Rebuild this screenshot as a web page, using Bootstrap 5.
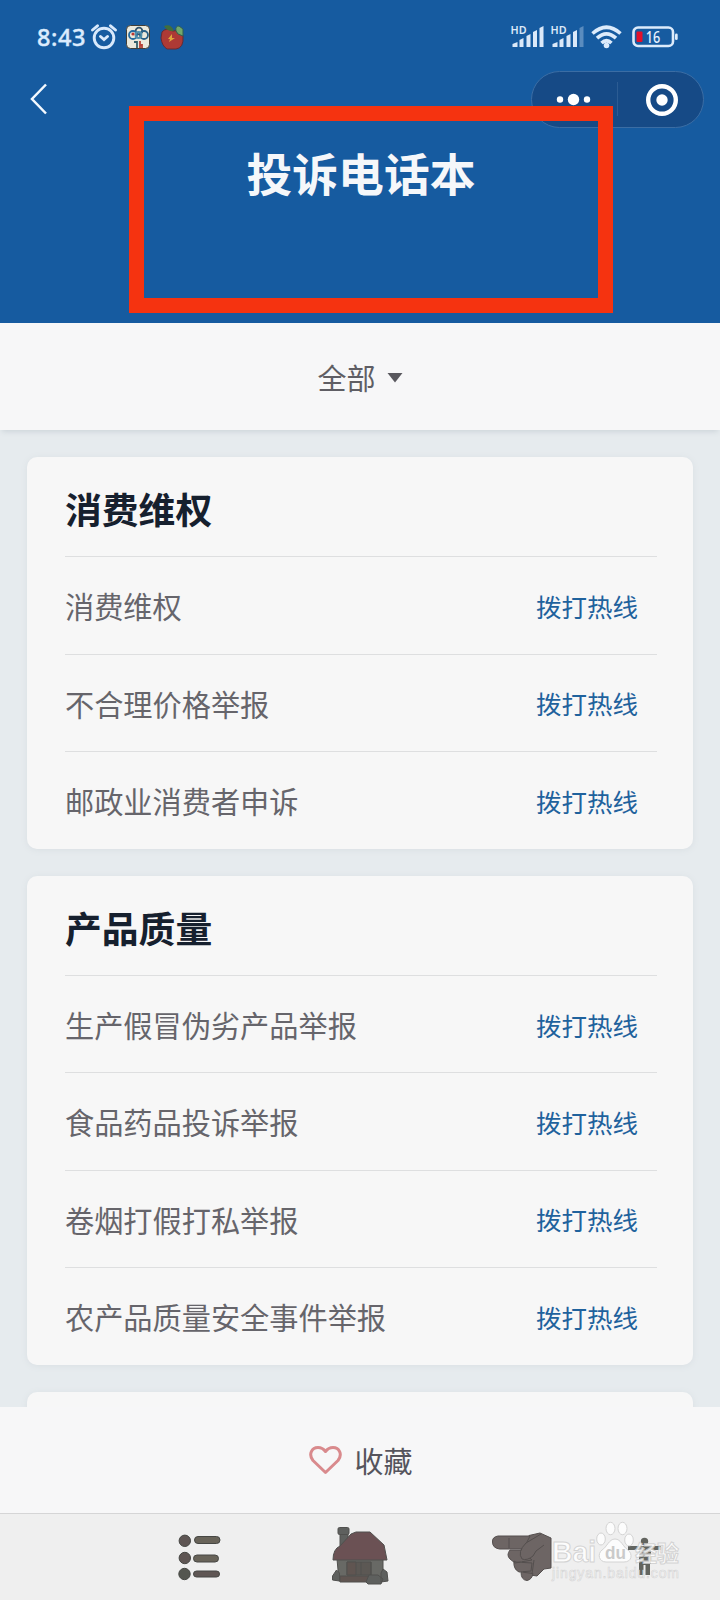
<!DOCTYPE html>
<html lang="zh-CN">
<head>
<meta charset="utf-8">
<meta name="viewport" content="width=device-width, initial-scale=1">
<title>投诉电话本</title>
<link href="https://cdn.jsdelivr.net/npm/bootstrap@5.3.0/dist/css/bootstrap.min.css" rel="stylesheet">
<style>
  body { font-family: "Noto Sans CJK SC", sans-serif; background: #e6ebee; color: #66656b; }
  .screen { width: 720px; height: 1600px; }
  svg { display: block; flex: none; }
  .hero { height: 323px; background: #165ba0; color: #f5f7fa; }
  .status { height: 71px; padding: 3px 42px 0 37px; }
  .clock { font: 500 23.500px/24px "Noto Sans", sans-serif; width: 54px; color: #dcebfd; letter-spacing: .6px; -webkit-text-stroke: .4px #dcebfd; }
  .app-a { margin: 0 9px 0 8px; }
  .signal-a { margin-right: 4px; }
  .wifi { margin: 0 10px 0 6px; }
  .navrow { height: 56px; padding: 0 16px 0 29px; }
  .capsule { width: 173px; height: 57px; background: #164a86; border: 1px solid #3b6da4; }
  .split { width: 1px; height: 34px; background: #2c5c93; }
  .hero h1 { font-size: 45.8px; line-height: 60px; margin: 15px 0 0 2px; }
  .marker { left: 129px; top: 106px; width: 484px; height: 207px; border: 15px solid #f53310; }
  .filter { height: 107px; background: #f7f7f8; font-size: 29px; gap: 11px; padding-top: 3px; box-shadow: 0 4px 5px -2px #cfd6db; color: #5f5e64; }
  .list-area { min-height: 0; padding: 27px 27px 0; gap: 27px; }
  .book { background: #f7f7f7; border-radius: 10px; padding: 0 36px 0 38px; box-shadow: 0 1px 6px #d9dfe3; }
  .book h2 { height: 99.4px; margin: 0; padding-top: 3px; font-size: 36.8px; font-weight: 700; color: #16202e; }
  .entry { height: 97.4px; border-top: 1px solid #dedfe0; font-size: 29.2px; padding: 1px 19px 0 0; }
  .entry a { font-size: 25.5px; color: #1f629d; }
  .next-book { height: 60px; }
  .fav { height: 106px; background: #f7f7f8; font-size: 29px; gap: 12px; color: #55545d; padding: 2px 0 0 2px; }
  .tabs { height: 87px; background: #efefef; border-top: 1px solid #d5d5d6; }
  .mark-logo { left: 545px; top: 1515px; }
</style>
</head>
<body>
<div class="screen position-relative overflow-hidden d-flex flex-column">
  <header class="hero flex-shrink-0">
    <div class="status d-flex align-items-center">
      <span class="clock">8:43</span>
      <svg width="26" height="26" viewBox="0 0 26 26" fill="none" stroke="#d9e9fb" stroke-width="2.9" stroke-linecap="round"><circle cx="13" cy="14" r="9.8"/><path d="M1.500 6 6.500 1.800M24.500 6 19.500 1.800M9.500 12.500l3.500 3 3.500-3"/></svg>
      <svg class="app-a" width="26" height="24" viewBox="0 0 26 24"><rect x="1.500" y=".5" width="23" height="23" rx="4" fill="#ebe9dc" stroke="#433f37"/><g fill="none" stroke-width="1.800"><circle cx="14" cy="6" r="3.300" stroke="#34546c"/><circle cx="8" cy="10" r="4" stroke="#246ba0"/><circle cx="19" cy="10" r="4" stroke="#286087"/><circle cx="13.500" cy="10" r="3" stroke="#5290ac"/><path d="M9 17h3v6" stroke="#35626d"/><path d="M15 16v7m0-3h2v3" stroke="#b64237"/></g><circle cx="8" cy="9" r="1.600" fill="#b93732"/></svg>
      <svg width="26" height="26" viewBox="0 0 26 26"><path d="M2 8Q6 3 13 7q8-2 10 5 1 12-7 13H7Q2 22 1 14z" fill="#ad3a35" stroke="#682a32"/><path d="M4 2q7-3 10 5Q7 8 4 2z" fill="#416e3d"/><path d="M16 7q-1-5 3-5l4 3v7l-5-2z" fill="#72a86c" stroke="#315f50"/><path d="M12 10v4h3l-6 4 1-3H8z" fill="#e0a63c"/></svg>
      <svg class="signal-a ms-auto" width="36" height="40" viewBox="-2 -8 36 40" fill="#dbe9f9"><text x="-.5" y="8.500" font-family="Noto Sans" font-size="11" font-weight="600" textLength="16" lengthAdjust="spacingAndGlyphs">HD</text><path d="M1.500 22v-3l5-2v5zM8.500 22v-7l4-2v9zM15.500 22V11l4-2v13zM22 22V7l4-2v17zM28.500 22V3l4-2v21z"/></svg>
      <svg width="36" height="40" viewBox="-2 -8 36 40" fill="#dbe9f9"><text x="-.5" y="8.500" font-family="Noto Sans" font-size="11" font-weight="600" textLength="16" lengthAdjust="spacingAndGlyphs">HD</text><path d="M1.500 22v-3l5-2v5zM8.500 22v-7l4-2v9zM15.500 22V11l4-2v13zM22 22V7l4-2v17z"/><path opacity=".35" d="M28.500 22V3l4-2v21z"/></svg>
      <svg class="wifi" width="31" height="24" viewBox="0 0 31 24" fill="none" stroke="#dcebfb" stroke-width="3.600"><path d="M1.500 8.500Q15.500-4 29.500 8.500M6 13.200Q15.500 4.500 25 13.200M10.500 18q5-4.500 10 0"/><circle cx="15.500" cy="20.500" r="2.800" fill="#dcebfb" stroke="none"/></svg>
      <svg width="46" height="22" viewBox="0 0 46 22"><rect x="1.500" y="1.500" width="39.500" height="18.500" rx="4.500" fill="none" stroke="#dcebfb" stroke-width="2.600"/><rect x="4.500" y="5.500" width="6" height="10.500" rx="1" fill="#e2102b"/><rect x="43" y="7.500" width="2.700" height="6.500" rx="1.300" fill="#dcebfb"/><text x="13.800" y="16.500" font-family="Noto Sans" font-size="15.500" font-weight="500" fill="#e6f1ff" textLength="14.500" lengthAdjust="spacingAndGlyphs">16</text></svg>
    </div>
    <div class="navrow d-flex align-items-center justify-content-between">
      <svg width="20" height="32" viewBox="0 0 20 32" fill="none" stroke="#f3f9ff" stroke-width="2.500"><path d="M17 1.500 3 16l14 14.500"/></svg>
      <div class="capsule rounded-pill d-flex align-items-center">
        <svg width="85" height="54" viewBox="0 0 85 54" fill="#fff"><circle cx="28" cy="27.500" r="3.200"/><circle cx="41.500" cy="27.500" r="5.700"/><circle cx="55" cy="27.500" r="3.200"/></svg>
        <span class="split"></span>
        <svg width="84" height="54" viewBox="0 0 84 54"><circle cx="44" cy="28" r="13.800" fill="none" stroke="#fff" stroke-width="4.400"/><circle cx="44" cy="28" r="5.700" fill="#fff"/></svg>
      </div>
    </div>
    <h1 class="text-center fw-bold">投诉电话本</h1>
  </header>
  <div class="marker position-absolute"></div>

  <div class="filter flex-shrink-0 d-flex align-items-center justify-content-center">
    <span>全部</span>
    <svg width="16" height="10" viewBox="0 0 16 10"><path d="M.5 0h15L8 9.500z" fill="#59585e"/></svg>
  </div>

  <main class="list-area d-flex flex-column flex-grow-1 overflow-hidden">
    <section class="book flex-shrink-0">
      <h2 class="d-flex align-items-center">消费维权</h2>
      <div class="entry d-flex align-items-center justify-content-between"><span>消费维权</span><a class="text-decoration-none" href="#">拨打热线</a></div>
      <div class="entry d-flex align-items-center justify-content-between"><span>不合理价格举报</span><a class="text-decoration-none" href="#">拨打热线</a></div>
      <div class="entry d-flex align-items-center justify-content-between"><span>邮政业消费者申诉</span><a class="text-decoration-none" href="#">拨打热线</a></div>
    </section>
    <section class="book flex-shrink-0">
      <h2 class="d-flex align-items-center">产品质量</h2>
      <div class="entry d-flex align-items-center justify-content-between"><span>生产假冒伪劣产品举报</span><a class="text-decoration-none" href="#">拨打热线</a></div>
      <div class="entry d-flex align-items-center justify-content-between"><span>食品药品投诉举报</span><a class="text-decoration-none" href="#">拨打热线</a></div>
      <div class="entry d-flex align-items-center justify-content-between"><span>卷烟打假打私举报</span><a class="text-decoration-none" href="#">拨打热线</a></div>
      <div class="entry d-flex align-items-center justify-content-between"><span>农产品质量安全事件举报</span><a class="text-decoration-none" href="#">拨打热线</a></div>
    </section>
    <section class="book next-book flex-shrink-0"></section>
  </main>

  <div class="fav flex-shrink-0 d-flex align-items-center justify-content-center">
    <svg width="33" height="30" viewBox="0 0 33 30" fill="none" stroke="#d98a8d" stroke-width="3" stroke-linejoin="round"><path d="M16.500 26.500 4 14.500C-1 8 3 1.500 9 1.500c3.500 0 6 2 7.500 4 1.500-2 4-4 7.500-4 6 0 10 6.500 5 13z"/></svg>
    <span>收藏</span>
  </div>
  <nav class="tabs flex-shrink-0">
    <svg width="720" height="86" viewBox="0 1514 720 86" stroke-linejoin="round">
      <g fill="#5f5654" stroke="#464744"><circle cx="184.800" cy="1540.800" r="5.700"/><circle cx="184.800" cy="1558" r="5.700"/><circle cx="184.500" cy="1574" r="5.700" fill="#545650"/><rect x="194.500" y="1536.500" width="25.500" height="7" rx="3.500" fill="#686359"/><rect x="193.500" y="1555" width="25" height="7" rx="3.500" fill="#686359"/><rect x="193.500" y="1571" width="26" height="6" rx="3"/></g>
      <g stroke="#50504e" fill="#5e605e"><path d="M340 1532h8v18h-8z"/><rect x="338" y="1527.500" width="11" height="7" rx="1.500"/><path d="M337 1559h46v22h-44z" fill="#686965"/><path d="M333 1560q0-11 7-14l11-12 5-2h14l14 13 3 15z" fill="#6b5154"/><path d="M347 1562h24v13h-24z" fill="#5c5854"/><path d="M347 1562h9v13h-9zM361 1562v13M371 1562v18M340 1576h32v6h-32z" fill="#605551"/><path d="M332.500 1580v-4l4-6 3 3v8zM381 1582v-9l2-4 4 3 1 9zM366 1582l3-7h9l5 4-2 5h-13z"/></g>
      <g fill="#6d6564" stroke="#544f4e"><path d="M529 1535.500 540 1533l11 5v30l-7 1-7 7-13-2-3-24z"/><path d="M530 1536h-32q-6 1-5.500 6 0 6 7 7h24z"/><path d="M521 1550h-11q-4 5 0 9l5 4 17-3zM516 1562l-2-1q-1 8 5 11l12-1 1-8z"/><path d="M521 1572q0 8 6 8.500 5-1 6-7z"/><path d="m541 1534-15 9q-9 9-4 16 5 2 11-3l3-5 8-6"/><path d="M534 1560l-2 14M509 1538v10" fill="none"/></g>
      <g fill="#62645f"><circle cx="644.500" cy="1541.500" r="3.700"/><path d="M628 1546h33v4h-10v14h-12v-14h-11z"/><path d="M639 1562h11v13h-4.500v-10h-2v10H639z"/></g>
    </svg>
  </nav>

  <svg class="mark-logo position-absolute" width="145" height="70" viewBox="545 1515 145 70" fill="#fff" stroke="#cfcfcf" stroke-width="1" opacity=".85">
    <path d="M615 1539c-6 0-8 8-13 11-5 4-3 12 4 12h18c8 0 9-8 4-12-5-3-7-11-13-11z"/>
    <ellipse cx="601" cy="1539" rx="4.300" ry="6"/><ellipse cx="610.500" cy="1528.500" rx="4.500" ry="6.200"/><ellipse cx="622.500" cy="1528.500" rx="4.500" ry="6.200"/><ellipse cx="629" cy="1540" rx="4.300" ry="6"/>
    <g font-family="Liberation Sans, Noto Sans CJK SC, sans-serif">
      <text x="552" y="1562" font-size="29" font-weight="700" textLength="44" lengthAdjust="spacingAndGlyphs">Bai</text>
      <text x="605" y="1559" font-size="18" font-weight="700" fill="#c4c4c4" stroke="none" textLength="21" lengthAdjust="spacingAndGlyphs">du</text>
      <text x="635" y="1561" font-size="22" font-weight="700" font-family="Noto Sans CJK SC" textLength="44">经验</text>
      <text x="552" y="1578" font-size="14" stroke-width=".6" textLength="127">jingyan.baidu.com</text>
    </g>
  </svg>
</div>
<script src="https://cdn.jsdelivr.net/npm/bootstrap@5.3.0/dist/js/bootstrap.bundle.min.js"></script>
</body>
</html>
